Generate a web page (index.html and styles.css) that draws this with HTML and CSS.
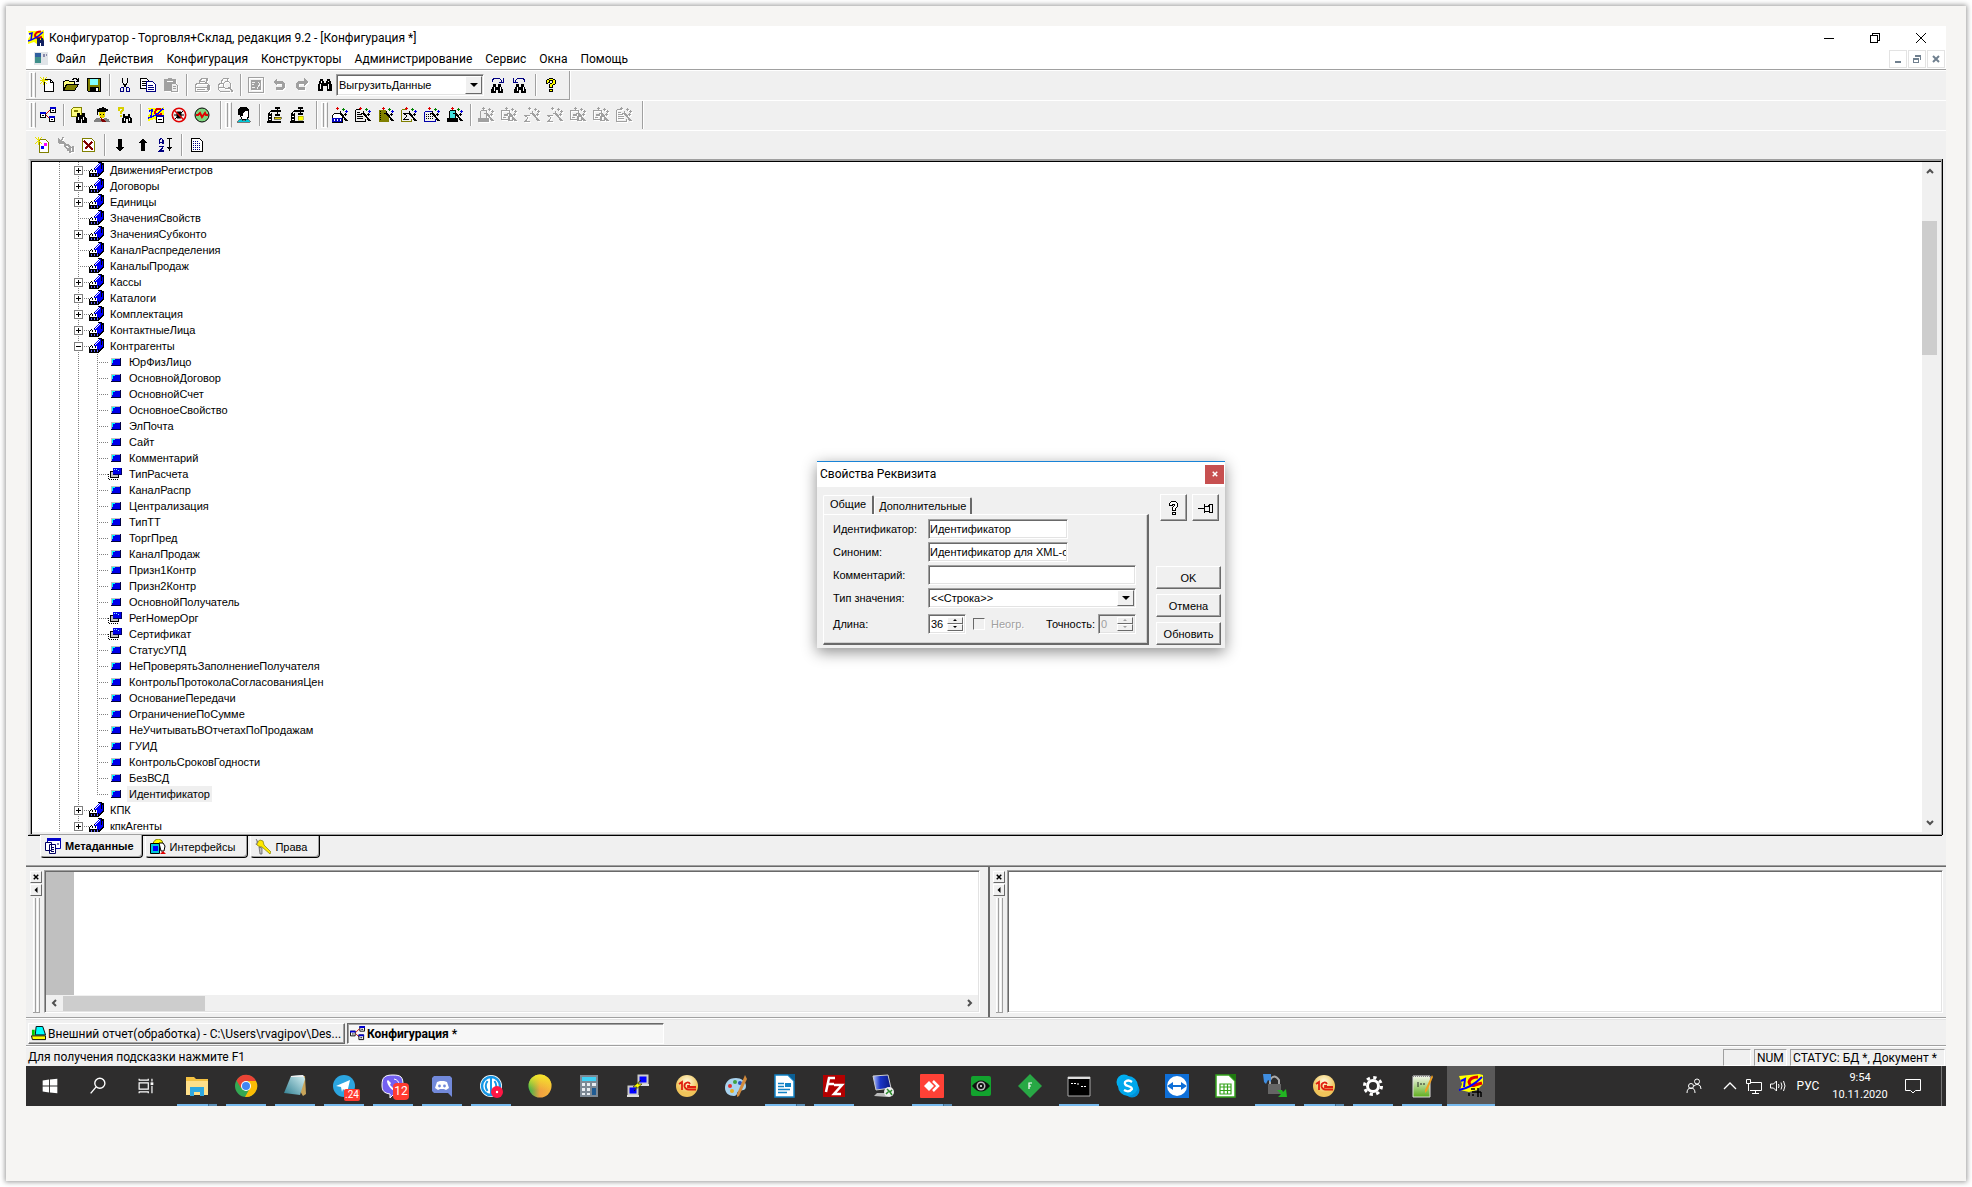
FILE: index.html
```html
<!DOCTYPE html>
<html lang="ru">
<head>
<meta charset="utf-8">
<title>Конфигуратор - Торговля+Склад</title>
<link rel="stylesheet" href="styles.css">
</head>
<body>
<svg class="sprite" aria-hidden="true">
  <defs>
    <linearGradient id="g-sun" x1="0" x2="1"><stop offset="0" stop-color="#2fb54a"/><stop offset=".5" stop-color="#f0a040"/><stop offset="1" stop-color="#f6b83a"/></linearGradient>
    <linearGradient id="g-sun2" x1="0" y1="0" x2="0" y2="1"><stop offset="0" stop-color="#f4e82a"/><stop offset=".7" stop-color="#f4e82a" stop-opacity="0"/></linearGradient>
    <radialGradient id="g-gold" cx=".5" cy=".3"><stop offset="0" stop-color="#fffbe0"/><stop offset="1" stop-color="#f0c45a"/></radialGradient>
    <linearGradient id="g-note" x1="0" y1="1" x2="1" y2="0"><stop offset="0" stop-color="#2f7f92"/><stop offset="1" stop-color="#d8f3f5"/></linearGradient>
    <linearGradient id="g-mon" x1="0" x2="1"><stop offset="0" stop-color="#b9c8ff"/><stop offset=".4" stop-color="#1a35c8"/><stop offset="1" stop-color="#0a1a80"/></linearGradient>
    <linearGradient id="g-npp" x1="0" y1="0" x2="0" y2="1"><stop offset="0" stop-color="#f4f7ea"/><stop offset="1" stop-color="#5fae1c"/></linearGradient>
  </defs>
  <symbol id="page-new" viewBox="0 0 16 16"><path d="M4.500 2.500h6l3 3v9h-9z" fill="#fff" stroke="#000"/><path d="M10.500 2.500v3h3" fill="none" stroke="#000"/><path d="M0 0l7 7M7 0L0 7M3.500 0v8M0 3.500h8" stroke="#e8e000" stroke-width="1.300"/></symbol>
  <symbol id="folder" viewBox="0 0 16 16"><path d="M.5 13.500v-9h1l1-1h3l1 1h5v3" fill="#ffff80" stroke="#000"/><path d="M.5 13.500l3-6h12l-4 6z" fill="#808000" stroke="#000"/><path d="M9 2.500h1l1-1h2l2 2M15.500 1v3h-3" fill="none" stroke="#000"/></symbol>
  <symbol id="disk" viewBox="0 0 16 16"><path d="M1.500 1.500h13v13h-12l-1-1z" fill="#808000" stroke="#000"/><path d="M4 2h8v6H4z" fill="#80ffff"/><path d="M4 10h9v5H4z" fill="#000"/><path d="M10 11h2v3h-2z" fill="#fff"/></symbol>
  <symbol id="cut" viewBox="0 0 16 16"><path d="M5.500 1v4l3 5M10.500 1v4l-3 5" fill="none" stroke="#000"/><path d="M4.500 10.500h2v4h-3v-3zM9.500 10.500h2l1 1v3h-3z" fill="none" stroke="#000080"/></symbol>
  <symbol id="copy" viewBox="0 0 16 16"><path d="M.5 1.500h6l2 2v8h-8z" fill="#fff" stroke="#000"/><path d="M2 4.500h4M2 6.500h5M2 8.500h5" stroke="#000"/><path d="M6.500 4.500h6l3 3v7h-9z" fill="#fff" stroke="#000080"/><path d="M8 8.500h5M8 10.500h6M8 12.500h6" stroke="#000080"/></symbol>
  <symbol id="paste" viewBox="0 0 16 16"><path d="M1 2h4V1h4v1h4v4H8v8H1z" fill="#a0a0a0"/><path d="M4 4h6" stroke="#fff"/><path d="M8.500 6.500h4l2 2v6h-6z" fill="#f0f0f0" stroke="#a0a0a0"/><path d="M10 9.500h3M10 11.500h3" stroke="#a0a0a0"/></symbol>
  <symbol id="print" viewBox="0 0 16 16"><path d="M5.500 6V4l2-2.500h6L12 6M1.500 7.500l2-1h10l2 2v4l-2 2h-12zM1 10.500h12M3 12.500h8M6 4.500h5" fill="none" stroke="#a0a0a0" stroke-width="1.300"/><path d="M13 8h2v5h-2z" fill="#a0a0a0"/></symbol>
  <symbol id="preview" viewBox="0 0 16 16"><path d="M4.500 6V4l2-2.500h5L10 4M1.500 7.500l2-1h3M1.500 7.500v5l2 2h9M1 10.500h6" fill="none" stroke="#a0a0a0"/><circle cx="10" cy="8" r="3.500" fill="none" stroke="#a0a0a0"/><path d="M12 10l4 5" stroke="#a0a0a0" stroke-width="2"/></symbol>
  <symbol id="props-off" viewBox="0 0 16 16"><path d="M.5.5h15v15H.5z" fill="none" stroke="#a0a0a0"/><path d="M3 3h10v10H3z" fill="#a0a0a0"/><path d="M4 5h3M4 7h2M4 10h3M10 5l2 2-3 5" stroke="#f0f0f0" fill="none"/></symbol>
  <symbol id="undo" viewBox="0 0 16 16"><path d="M2 5l4-4v3h4q4 0 4 4.500T9 13H5v-3h4q2 0 2-1.500T9 7H6v2z" fill="#a0a0a0"/></symbol>
  <symbol id="redo" viewBox="0 0 16 16"><path d="M14 5l-4-4v3H6Q2 4 2 8.500T7 13h4v-3H7Q5 10 5 8.500T7 7h3v2z" fill="#a0a0a0"/></symbol>
  <symbol id="bino" viewBox="0 0 16 16"><path d="M3 2h3v2h1v2h2V4h1V2h3v2h1v3h1v7h-5V9H6v5H1V7h1V4h1z" fill="#000"/><path d="M3.500 7v5M11.500 7v5M4.500 4v2M11.500 4v1" stroke="#fff"/></symbol>
  <symbol id="bino-next" viewBox="0 0 16 16"><path d="M4 7h3v3h2V7h3v2l2 4v3H9v-3H7v3H2v-3l2-4z" fill="#000"/><path d="M5.500 10v4M11.500 10v4" stroke="#fff"/><path d="M3 5q0-4 5-4 4 0 5 4" fill="none" stroke="#000080"/><path d="M14.500 1v4.500H10" fill="none" stroke="#000080"/></symbol>
  <symbol id="bino-prev" viewBox="0 0 16 16"><path d="M4 7h3v3h2V7h3v2l2 4v3H9v-3H7v3H2v-3l2-4z" fill="#000"/><path d="M5.500 10v4M11.500 10v4" stroke="#fff"/><path d="M13 5q0-4-5-4-4 0-5 4" fill="none" stroke="#000080"/><path d="M1.500 1v4.500H6" fill="none" stroke="#000080"/></symbol>
  <symbol id="help" viewBox="0 0 16 16"><path d="M3.500 6.500v-3l3-2h3l3 2v3l-3 2v2h-3v-3l3-2v-2h-3v2z" fill="#ff0" stroke="#000"/><path d="M6.500 12.500h3v2h-3z" fill="#ff0" stroke="#000"/></symbol>
  <symbol id="scheme" viewBox="0 0 16 16"><path d="M6 7l4-4M6 8l4 4" stroke="#c00"/><path d="M.5 5.500h5v5h-5zM10.500.5h5v5h-5zM9.500 9.500h5v5h-5z" fill="#fff" stroke="#000"/><path d="M0 5h6v2H0zM10 0h6v2h-6zM9 9h6v2H9z" fill="#0000d0"/><path d="M2 8.500h2M12 3.500h2M11 12.500h2" stroke="#000"/></symbol>
  <symbol id="find-folder" viewBox="0 0 16 16"><path d="M.5 9.500v-7l2-2h8v9z" fill="#ffff80" stroke="#808000"/><path d="M3 3h4v2H3z" fill="#808000"/><path d="M6 6h3v2h2V6h3v3l2 3v4h-5v-4h-1v4H5v-5l1-2z" fill="#000"/><path d="M7.500 10v3M12.500 10v3" stroke="#fff"/></symbol>
  <symbol id="scholar" viewBox="0 0 16 16"><path d="M2 3l7-3 6 3-4 2H5z" fill="#000"/><path d="M5 5h6v4l-2 2H7L5 9z" fill="#e8d800"/><path d="M3 3v5M6 7h1M9 7h1" stroke="#000"/><path d="M0 15q1-5 6-4l2 3 2-3q5 0 6 4z" fill="#808080"/><path d="M6 10l3 2 3 3H8z" fill="#800000"/></symbol>
  <symbol id="find-help" viewBox="0 0 16 16"><path d="M1.500 3.500v-2l1-1h3v3l-2 2v1M3 8.500h2" fill="none" stroke="#d8d000" stroke-width="2"/><path d="M6 7h2v2h3V7h2v3l2 2v4h-4v-4H9v4H5v-4l1-2z" fill="#000"/><path d="M7.500 11v3M12.500 11v3" stroke="#fff"/></symbol>
  <symbol id="onec" viewBox="0 0 16 16"><path d="M0 1h13l3-1v11l-7 3-3-2-6 2V9l2-3z" fill="#ff0"/><path d="M1 4l3-1-1 7" fill="none" stroke="#00f" stroke-width="1.500"/><path d="M13 1.500q-5 0-6 3.500 0 3 3 3l4-1" fill="none" stroke="#e00000" stroke-width="2"/><path d="M0 11q8-2 15-9" fill="none" stroke="#00f" stroke-width="1.500"/></symbol>
  <symbol id="onec-win" viewBox="0 0 16 16"><use href="#onec"/><path d="M8.500 8.500h7v7h-7z" fill="#fff" stroke="#000"/><path d="M8 8h8v2H8z" fill="#00a"/><path d="M10 12.500h4" stroke="#000"/></symbol>
  <symbol id="onec-app" viewBox="0 0 16 16"><use href="#onec"/><path d="M9 8h3v2h1V8h2l1 3v5h-3v-3h-1v3H9v-5z" fill="#102060"/></symbol>
  <symbol id="bug" viewBox="0 0 16 16"><path d="M6 5h4v6H6zM4 4l2 2M12 4l-2 2M3 8h3M10 8h3M4 12l2-2M12 12l-2-2" fill="#000" stroke="#000"/><circle cx="8" cy="8" r="6.700" fill="none" stroke="#e00000" stroke-width="1.600"/><path d="M3 3l10 10" stroke="#e00000" stroke-width="1.500"/></symbol>
  <symbol id="scope" viewBox="0 0 16 16"><circle cx="8" cy="8" r="7" fill="#7fd67f" stroke="#000"/><path d="M2 8h2l2-2 2 4 3-4 1 2h2" fill="none" stroke="#e00000" stroke-width="2"/></symbol>
  <symbol id="user" viewBox="0 0 16 16"><path d="M4 8V3l2-2h4l2 2v4l1 2-2 3H6z" fill="#fff" stroke="#000"/><path d="M2 8V2l3-2h5l3 2v2H9L7 6v3H5z" fill="#000"/><path d="M1 15l3-3 4 2 3-2 3 2v1z" fill="#00c8d8" stroke="#000" stroke-width=".5"/></symbol>
  <symbol id="press" viewBox="0 0 16 16"><path d="M2 15V6l2-2h4M4 15V7l1-1M0 15h14M8 1h5M10.500 1v7M8 4h6M8 8h5" fill="none" stroke="#000" stroke-width="1.300"/><path d="M2 9h2M2 12h2" stroke="#fff"/><path d="M7 10h7v2H7z" fill="#d8c800" stroke="#000" stroke-width=".5"/></symbol>
  <symbol id="press2" viewBox="0 0 16 16"><path d="M2 15V6l2-2h4M4 15V7l1-1M0 15h14M8 1h5M10.500 1v5M8 4h6M8 7h5" fill="none" stroke="#000" stroke-width="1.300"/><path d="M2 9h2M2 12h2" stroke="#fff"/><path d="M8 9h5v4H8z" fill="#ff0" stroke="#808000" stroke-width=".5"/></symbol>
  <symbol id="wand" viewBox="0 0 16 16"><path d="M9 7l6 7" stroke="currentColor" stroke-width="2"/><path d="M8 4v4M6 6h4M13 6v3M12 7.500h3" stroke="currentColor"/><path d="M5.500 0v3M4 1.500h3" stroke="var(--c1)"/><path d="M11.500 1v3M10 2.500h3" stroke="var(--c2)"/><path d="M14.500 3v3M13 4.500h3" stroke="var(--c3)"/></symbol>
  <symbol id="w-book" viewBox="0 0 16 16"><path d="M0 9l3-3h5l2 3v6H0z" fill="#fff" stroke="currentColor"/><path d="M0 11h10v4H0z" fill="var(--c4)"/><path d="M2 12v2M5 12v2M8 12v2" stroke="#fff"/><use href="#wand"/></symbol>
  <symbol id="w-doc" viewBox="0 0 16 16"><path d="M.5 2.500h4M.5 2.500v12h10v-3" fill="none" stroke="currentColor"/><path d="M2 5.500h3M2 7.500h5M2 9.500h6M2 11.500h6" stroke="currentColor"/><use href="#wand"/></symbol>
  <symbol id="w-journal" viewBox="0 0 16 16"><path d="M1 3h7v5l3 3v4H1z" fill="#808000"/><path d="M2.500 4v10" stroke="#000" stroke-dasharray="1 1"/><use href="#wand"/></symbol>
  <symbol id="w-sum" viewBox="0 0 16 16"><path d="M.5 2.500h4M.5 2.500v12h10v-3" fill="none" stroke="var(--c6)"/><path d="M8 6.500H3l3 2.500-3 3h5" fill="none" stroke="currentColor"/><use href="#wand"/></symbol>
  <symbol id="w-sigma" viewBox="0 0 16 16"><path d="M6 8.500H1L4 11l-3 3.500h5" fill="none" stroke="currentColor"/><use href="#wand"/></symbol>
  <symbol id="w-grid" viewBox="0 0 16 16"><path d="M.5 4.500h8M.5 4.500v10h11v-3" fill="none" stroke="#00a"/><path d="M2 7.500h6M2 9.500h7M2 11.500h8" stroke="#000" stroke-dasharray="1 1"/><use href="#wand"/></symbol>
  <symbol id="w-hat" viewBox="0 0 16 16"><path d="M2 5l2-2h4v8H2z" fill="var(--c5)" stroke="currentColor"/><path d="M0 11h11v4H0z" fill="currentColor"/><use href="#wand"/></symbol>
  <symbol id="w-tab" viewBox="0 0 16 16"><path d="M.5 3.500h8v9h-8zM2 10.500h3M7 9h4v4H7z" fill="none" stroke="currentColor"/><path d="M3 7h4v2H3z" fill="currentColor"/><use href="#wand"/></symbol>
  <symbol id="add-node" viewBox="0 0 16 16"><path d="M4.500 2.500h6l3 3v10h-9z" fill="#fff" stroke="#808000"/><path d="M0 0l7 7M7 0L0 7M3.500 0v8" stroke="#e8e000" stroke-width="1.300"/><path d="M6 9h3v3H6z" fill="#00f"/><path d="M9 6h3v3H9z" fill="#f0f"/></symbol>
  <symbol id="edit-off" viewBox="0 0 16 16"><path d="M0 2l5 5M5 0L2 7M0 5h6M6 6l3 3M7 9l3-1 2 2-2 3zM12 11l3-1v4l-3 1z" fill="none" stroke="#a0a0a0" stroke-width="1.500"/></symbol>
  <symbol id="del-node" viewBox="0 0 16 16"><path d="M1.500 1.500h9l3 3v10h-12z" fill="#fff" stroke="#808000"/><path d="M3 4l9 9M11 5l-7 7" stroke="#800000" stroke-width="2"/></symbol>
  <symbol id="down" viewBox="0 0 16 16"><path d="M6 2h4v8h2l-4 5-4-5h2z" fill="#000"/></symbol>
  <symbol id="up" viewBox="0 0 16 16"><path d="M6 14h4V6h2L8 1 4 6h2z" fill="#000"/></symbol>
  <symbol id="sort" viewBox="0 0 16 16"><path d="M1.500 7V3l1.500-2 2 2v4M1 5.500h5M1 9.500h4.500L1.500 14H6" fill="none" stroke="#000080" stroke-width="1.300"/><path d="M9 1.500h5M11.500 1v12" stroke="#000"/><path d="M9 10h5l-2.500 4z" fill="#000"/></symbol>
  <symbol id="sheet-i" viewBox="0 0 16 16"><path d="M2.500 1.500h8l3 3v10h-11z" fill="#fff" stroke="#000"/><path d="M4 4.500h5M4 6.500h8M4 8.500h8M4 10.500h8M4 12.500h8" stroke="#000080" stroke-dasharray="1 1"/></symbol>
  <symbol id="mdi-doc" viewBox="0 0 16 16"><path d="M1 1h14v13H1z" fill="#e0e4e8"/><path d="M2 2h6v10H2z" fill="#3f8f8a"/><path d="M2 2h6v4H2z" fill="#2f5f9f"/><path d="M10 3h2v3h-2zM13 3h1v2h-1z" fill="#88a"/></symbol>
  <symbol id="ref" viewBox="0 0 16 16"><path d="M0 15V10l3-4 5-5 1-1h4v1h2v8l-5 6H0z" fill="#000"/><path d="M8 1h4v6l-4 6V8H5z" fill="#00f"/><path d="M13 3l1-1v6l-4 5v-3l3-4z" fill="#00f"/><path d="M4 6l6-5M6 7l5-5M3 7h2" stroke="#fff" stroke-width="1.300"/><path d="M1 9l1-1h6v3H1z" fill="#fff"/><path d="M3.500 8v2M6.500 8v2" stroke="#000"/><path d="M2 13h1M5 13h1M8 13h1" stroke="#66f" stroke-width="2"/></symbol>
  <symbol id="attr" viewBox="0 0 16 16"><path d="M3 4h10v8H3z" fill="#c0c0c0"/><path d="M4 5h9v7H4z" fill="#0000e8"/><path d="M3 11.500h10M12.500 4v8" stroke="#000040"/><path d="M4 5h3v1H5v3H4z" fill="#0ff"/></symbol>
  <symbol id="attr-multi" viewBox="0 0 16 16"><path d="M.5 8v5.500h9" fill="none" stroke="#000" stroke-dasharray="1 1"/><path d="M2.500 5.500h8v6h-8z" fill="#c0c0c0" stroke="#000"/><path d="M5 2h9v7H5z" fill="#0000e8"/><path d="M5 8.500h9M13.500 2v7" stroke="#000060"/><path d="M6 3h1v1H6zM8 3h1v1H8zM10 4h1v1h-1z" fill="#80f0ff"/></symbol>
  <symbol id="t-meta" viewBox="0 0 16 16"><path d="M2.500.5h13v10h-13z" fill="#fff" stroke="#00a"/><path d="M2 0h14v3H2z" fill="#00c"/><path d="M.5 4.500h6v8h-6zM4.500 6.500h6v9h-6z" fill="#fff" stroke="#000060"/><path d="M6 9.500h3M6 11.500h3M6 13.500h3M12 6h2" stroke="#000060"/></symbol>
  <symbol id="t-int" viewBox="0 0 16 16"><path d="M3 5q1-5 6-5 4 1 4 5" fill="#ff0" stroke="#808000"/><path d="M.5 4.500h9v10h-9z" fill="#00c8d8" stroke="#000"/><path d="M3 7h5v5H3z" fill="#00f"/><path d="M9 4h4l2 3-1 5h-3z" fill="#fff" stroke="#000"/><path d="M10 15l3-3 3 3z" fill="#e00000"/></symbol>
  <symbol id="t-key" viewBox="0 0 16 16"><path d="M5 1l3 1 1 4 7 7-1 2-8-7-4-1-2-3z" fill="#ffe800" stroke="#808000" stroke-width=".7"/><path d="M1 0l2 3-2 3M4 8l3 1v6H5z" fill="#c0c0c0" stroke="#555" stroke-width=".7"/></symbol>
  <symbol id="doc-tab" viewBox="0 0 16 16"><path d="M5.500.5h7l3 9h-11z" fill="#0ff" stroke="#000"/><path d="M1 4h3v6H1z" fill="#0c0"/><path d="M.5 10.500h15v4h-14z" fill="#ff0" stroke="#000"/></symbol>
  <symbol id="x" viewBox="0 0 8 8"><path d="M1 1l6 6M7 1L1 7" stroke="currentColor" stroke-width="2"/></symbol>
  <symbol id="chev" viewBox="0 0 8 8"><path d="M1 6l3-3 3 3" fill="none" stroke="#505050" stroke-width="2"/></symbol>
  <symbol id="tri" viewBox="0 0 8 8"><path d="M0 2h8L4 6z" fill="currentColor"/></symbol>

  <symbol id="k-win" viewBox="0 0 24 24"><path d="M4 6l7-1v6.500H4zM12 4.800L20 4v7.500h-8zM4 12.500h7V19l-7-1zM12 12.500h8V20l-8-1z" fill="#fff"/></symbol>
  <symbol id="k-search" viewBox="0 0 24 24"><circle cx="14" cy="9" r="5.500" fill="none" stroke="#fff" stroke-width="1.500"/><path d="M10 13l-6 7" stroke="#fff" stroke-width="1.500"/></symbol>
  <symbol id="k-task" viewBox="0 0 24 24"><path d="M4.500 8.500h10v7h-10zM4.500 6V4M4.500 5.500h10V4M4.500 18v2M4.500 18.500h10V20M18.500 4v3M18.500 12v8" fill="none" stroke="#fff" stroke-width="1.300"/><path d="M17 8h3v3h-3z" fill="#fff"/></symbol>
  <symbol id="k-exp" viewBox="0 0 24 24"><path d="M1 3h8l2 2h12v15H1z" fill="#f5c242"/><path d="M1 7h22v14H1z" fill="#ffe08a"/><path d="M5 22v-9h14v9h-4v-4H9v4z" fill="#2fa8e0"/></symbol>
  <symbol id="k-chrome" viewBox="0 0 24 24"><circle cx="12" cy="12" r="11" fill="#34a853"/><path d="M2.500 6.500A11 11 0 0 1 22 7H12L7 14z" fill="#ea4335"/><path d="M22 7a11 11 0 0 1-11 16l5-9-2-7z" fill="#fbbc05"/><circle cx="12" cy="12" r="5" fill="#fff"/><circle cx="12" cy="12" r="4" fill="#4285f4"/></symbol>
  <symbol id="k-note" viewBox="0 0 24 24"><path d="M8 2h14l1 18-3 2z" fill="#c8a45a"/><path d="M8 2l12-1 2 4-5 16L1 19z" fill="url(#g-note)"/><path d="M8 2l12-1 1 2H8z" fill="#eee"/></symbol>
  <symbol id="k-tg" viewBox="0 0 24 24"><circle cx="12" cy="12" r="11" fill="#2ca5e0"/><path d="M4 12l14-6-3 13-4-4-1 3-1-5z" fill="#fff"/></symbol>
  <symbol id="k-viber" viewBox="0 0 24 24"><path d="M12 1c8 0 10 2 10 10s-2 9-9 9l-4 4v-4c-6-1-8-3-8-9C1 3 4 1 12 1z" fill="#7360f2" stroke="#fff"/><path d="M7 6l3 3-1 2 4 4 2-1 3 3-2 1C11 17 6 11 6 7z" fill="#fff"/><path d="M13 5q5 1 5 6" fill="none" stroke="#fff"/></symbol>
  <symbol id="k-discord" viewBox="0 0 24 24"><path d="M4 2h16l2 2v19l-4-4H4l-2-2V4z" fill="#7289da"/><path d="M7 8l3-1h4l3 1 2 6-3 2-2-1h-4l-2 1-3-2z" fill="#fff"/><circle cx="9.500" cy="12" r="1.400" fill="#7289da"/><circle cx="14.500" cy="12" r="1.400" fill="#7289da"/></symbol>
  <symbol id="k-ring" viewBox="0 0 24 24"><circle cx="12" cy="12" r="11" fill="#fff"/><circle cx="12" cy="12" r="9" fill="#fff" stroke="#1597e5" stroke-width="2.500"/><path d="M12 20V4M8.500 17Q5 12 8.500 7M15.500 17q3.500-5 0-10" fill="none" stroke="#1597e5" stroke-width="2"/><circle cx="18" cy="18" r="6" fill="#ff1744"/><circle cx="18" cy="18" r="1.200" fill="#fff"/></symbol>
  <symbol id="k-sun" viewBox="0 0 24 24"><circle cx="12" cy="12" r="11.500" fill="url(#g-sun)"/><circle cx="12" cy="12" r="11.500" fill="url(#g-sun2)"/></symbol>
  <symbol id="k-calc" viewBox="0 0 24 24"><path d="M3 1h18v22H3z" fill="#7d8995"/><path d="M5 3h14v4H5z" fill="#3fd0f5"/><path d="M5 9h3v3H5zM10 9h3v3h-3zM15 9h4v3h-4zM5 14h3v3H5zM10 14h3v3h-3zM5 19h3v2H5zM10 19h3v2h-3z" fill="#e8edf2"/><path d="M15 14h4v7h-4z" fill="#1f5b93"/></symbol>
  <symbol id="k-putty" viewBox="0 0 24 24"><path d="M12.500 1.500h9v8h-9zM2.500 12.500h9v8h-9z" fill="#00f" stroke="#ccc" stroke-width="2"/><path d="M11 11h12M1 22h12" stroke="#ddd" stroke-width="2"/><path d="M15 6l-8 7h4l-3 4 8-7h-4z" fill="#ff0" stroke="#000" stroke-width=".5"/></symbol>
  <symbol id="k-1c" viewBox="0 0 24 24"><circle cx="12" cy="12" r="11" fill="url(#g-gold)"/><path d="M4 10l3-2v8M15 10q-1-2-3-1.500-3 1-2.500 4 1 3 4 3H21M15 12h-2v1h8" fill="none" stroke="#e02010" stroke-width="1.800"/></symbol>
  <symbol id="k-paint" viewBox="0 0 24 24"><path d="M12 4C4 4 1 9 1 14s4 8 9 8c4 0 2-4 5-5s7 0 7-5-5-8-10-8z" fill="#a9d3ee"/><circle cx="6" cy="12" r="2" fill="#e03030"/><circle cx="11" cy="8" r="2" fill="#40a040"/><circle cx="8" cy="17" r="2" fill="#e8b020"/><circle cx="16" cy="9" r="2" fill="#2850c0"/><path d="M21 1l2 4-8 17-2 1V20z" fill="#d28a3c"/></symbol>
  <symbol id="k-writer" viewBox="0 0 24 24"><path d="M2 1h13l6 6v16H2z" fill="#fff" stroke="#1283c6" stroke-width="1.500"/><path d="M15 0h7v7z" fill="#0b5f94"/><path d="M5 9.500h6M5 12.500h6M5 15.500h12M5 18.500h9" stroke="#1283c6" stroke-width="1.500"/><path d="M12 9h6v4h-6z" fill="#1283c6"/></symbol>
  <symbol id="k-fz" viewBox="0 0 24 24"><path d="M1 1h22v22H1z" fill="#b30000"/><path d="M13 4H7L4 18M6 10h6M12 11h8l-8 9h7" fill="none" stroke="#fff" stroke-width="2.500"/></symbol>
  <symbol id="k-term" viewBox="0 0 24 24"><path d="M2 2l15-1 3 13-15 2z" fill="url(#g-mon)" stroke="#ccc"/><path d="M3 22l3-3h8l3 4z" fill="#bbb"/><circle cx="18" cy="18" r="5" fill="#eee"/><path d="M15 20l3-3-2-2M21 16l-2 2 2 3" fill="none" stroke="#2a8a2a" stroke-width="1.500"/></symbol>
  <symbol id="k-any" viewBox="0 0 24 24"><rect width="24" height="24" rx="1" fill="#ff4136"/><path d="M9 7l5 5-5 5-5-5z" fill="#fff"/><path d="M13 7l5 5-5 5" fill="none" stroke="#fff" stroke-width="2.500"/></symbol>
  <symbol id="k-eye" viewBox="0 0 24 24"><rect x="2" y="2" width="20" height="20" rx="2" fill="#12a32e"/><path d="M3 12q9-11 18 0-9 11-18 0z" fill="#111"/><circle cx="12" cy="12" r="4.500" fill="#bbb"/><circle cx="12" cy="12" r="3" fill="#111"/><circle cx="12" cy="12" r="1" fill="#fff"/></symbol>
  <symbol id="k-f" viewBox="0 0 24 24"><path d="M12 0l12 12-12 12L0 12z" fill="#28a845"/><path d="M11 15V9h3M11 12h2" fill="none" stroke="#fff" stroke-width="1.200"/></symbol>
  <symbol id="k-cmd" viewBox="0 0 24 24"><path d="M1 3h22v19H1z" fill="#000" stroke="#aaa"/><path d="M1 3h22v2H1z" fill="#ddd"/><path d="M4 9.500h5M11 9v3M14 12.500h5" stroke="#fff" stroke-dasharray="2 1"/></symbol>
  <symbol id="k-skype" viewBox="0 0 24 24"><circle cx="8" cy="8" r="7.500" fill="#00aff0"/><circle cx="16" cy="16" r="7.500" fill="#0090d8"/><circle cx="12" cy="12" r="10" fill="#00a8ec"/><path d="M16 8q-4-3-7 0-1 3 3 4t4 3q-3 4-8 1" fill="none" stroke="#fff" stroke-width="2.200"/></symbol>
  <symbol id="k-tv" viewBox="0 0 24 24"><path d="M0 0h24v24H0z" fill="#0e6fd8"/><circle cx="12" cy="12" r="10" fill="#fff"/><path d="M2 12l6-4v3h8V8l6 4-6 4v-3H8v3z" fill="#0e6fd8"/></symbol>
  <symbol id="k-calcs" viewBox="0 0 24 24"><path d="M2 1h13l6 6v16H2z" fill="#fff" stroke="#35a31c" stroke-width="1.500"/><path d="M15 0h7v7z" fill="#1f7a10"/><path d="M6 10h11v10H6zM6 13h11M6 16.500h11M10 10v10M13.500 10v10" fill="none" stroke="#35a31c" stroke-width="1.200"/></symbol>
  <symbol id="k-lock" viewBox="0 0 24 24"><path d="M7 11V6q4-7 9 0v5" fill="none" stroke="#aaa" stroke-width="2"/><path d="M5 10h13v10H5z" fill="#666"/><path d="M0 0h8v8L5 6l-2 4-2-2z" fill="#3f8de0"/><path d="M24 23h-9l3-3-4-4h5l1 2 3-3z" fill="#22b522"/></symbol>
  <symbol id="k-gear" viewBox="0 0 24 24"><circle cx="12" cy="12" r="5.500" fill="none" stroke="#fff" stroke-width="3"/><circle cx="12" cy="12" r="8.500" fill="none" stroke="#fff" stroke-width="3" stroke-dasharray="3.300 3.375"/></symbol>
  <symbol id="k-npp" viewBox="0 0 24 24"><path d="M3 2h17v21H3z" fill="url(#g-npp)" stroke="#ddd"/><path d="M3 2h17" stroke="#888" stroke-width="2" stroke-dasharray="1 1"/><path d="M8 8v5M10 10h2M13 10h2" stroke="#222"/><path d="M22 1l1 2-6 14-2 2V16z" fill="#f0a020"/></symbol>
  <symbol id="k-1c7" viewBox="0 0 24 24"><path d="M0 2l20-2 4 1v9l-6 6-8 2-9-2 2-6z" fill="#ff0"/><path d="M2 7l4-2-1 8" fill="none" stroke="#00f" stroke-width="2"/><path d="M19 3q-8 0-9 5 1 5 6 3l7-2" fill="none" stroke="#e00000" stroke-width="3"/><path d="M0 16q12-2 23-13" fill="none" stroke="#00f" stroke-width="2"/><path d="M12 15h4M13 18h9M19 14v9M10 22v-3M14 22v-2M22 18v5" stroke="#000" stroke-width="1.500"/></symbol>
  <symbol id="s-people" viewBox="0 0 16 16"><circle cx="5" cy="8" r="2.500" fill="none" stroke="#fff"/><path d="M1 15q0-5 4-5 4 0 4 5" fill="none" stroke="#fff"/><circle cx="11" cy="3.500" r="2.500" fill="none" stroke="#fff"/><path d="M8 8q2-2 4-1.500 3 .5 3 4.500" fill="none" stroke="#fff"/></symbol>
  <symbol id="s-up" viewBox="0 0 16 16"><path d="M2 11l6-6 6 6" fill="none" stroke="#fff" stroke-width="1.300"/></symbol>
  <symbol id="s-net" viewBox="0 0 16 16"><path d="M4 4.500h11.500v8H4M9.500 13v2.500M6 15.500h7M.5 1.500h4v4h-4zM2.500 6v7" fill="none" stroke="#fff"/></symbol>
  <symbol id="s-vol" viewBox="0 0 16 16"><path d="M.5 6h3l3-3v10l-3-3h-3zM8.500 6q1 2 0 4M11 4.500q2 3.500 0 7M13.500 3q3 5 0 10" fill="none" stroke="#fff"/></symbol>
  <symbol id="s-msg" viewBox="0 0 16 16"><path d="M.5 1.500h15v11h-5L8 15l-2.500-2.500h-5z" fill="none" stroke="#fff"/></symbol>
</svg>

<main class="sheet">
<div class="app">
  <header class="titlebar">
    <svg class="i16"><use href="#onec-app"/></svg>
    <h1 class="title">Конфигуратор - Торговля+Склад, редакция 9.2 - [Конфигурация *]</h1>
    <div class="win-btns">
      <button aria-label="Свернуть"><svg viewBox="0 0 10 10"><path d="M0 5.500h10" stroke="#000"/></svg></button>
      <button aria-label="Восстановить"><svg viewBox="0 0 10 10"><path d="M.5 2.500h7v7h-7zM2.500 2V.5h7v7H8" fill="none" stroke="#000"/></svg></button>
      <button aria-label="Закрыть"><svg viewBox="0 0 10 10"><path d="M0 0l10 10M10 0L0 10" stroke="#000" shape-rendering="auto"/></svg></button>
    </div>
  </header>
  <nav class="menubar">
    <svg class="i16"><use href="#mdi-doc"/></svg>
    <button>Файл</button><button>Действия</button><button>Конфигурация</button><button>Конструкторы</button><button>Администрирование</button><button>Сервис</button><button>Окна</button><button>Помощь</button>
    <div class="mdi-btns">
      <button aria-label="Свернуть окно"><svg viewBox="0 0 8 8"><path d="M1 6h6v2H1z" fill="#70808f"/></svg></button>
      <button aria-label="Восстановить окно"><svg viewBox="0 0 8 8"><path d="M0 3h6v5H0zM2 0h6v5H7V2H2z" fill="#70808f"/><path d="M1 5h4v2H1z" fill="#fff"/></svg></button>
      <button aria-label="Закрыть окно"><svg viewBox="0 0 8 8" color="#70808f"><use href="#x"/></svg></button>
    </div>
  </nav>

  <div class="bars">
    <div class="bar-row">
      <div class="bar bar-top"><i class="grip"></i>
        <button aria-label="Новый"><svg><use href="#page-new"/></svg></button><button aria-label="Открыть"><svg><use href="#folder"/></svg></button><button aria-label="Сохранить"><svg><use href="#disk"/></svg></button><i class="sep"></i>
        <button aria-label="Вырезать"><svg><use href="#cut"/></svg></button><button aria-label="Копировать"><svg><use href="#copy"/></svg></button><button class="off" aria-label="Вставить" disabled><svg><use href="#paste"/></svg></button><i class="sep"></i>
        <button class="off" aria-label="Печать" disabled><svg><use href="#print"/></svg></button><button class="off" aria-label="Просмотр" disabled><svg><use href="#preview"/></svg></button><i class="sep"></i>
        <button class="off" aria-label="Свойства" disabled><svg><use href="#props-off"/></svg></button><button class="off" aria-label="Отменить" disabled><svg><use href="#undo"/></svg></button><button class="off" aria-label="Вернуть" disabled><svg><use href="#redo"/></svg></button><button aria-label="Найти"><svg><use href="#bino"/></svg></button>
        <span class="combo combo-find"><select aria-label="Строка поиска"><option>ВыгрузитьДанные</option></select><span class="drop"><svg><use href="#tri"/></svg></span></span>
        <button aria-label="Найти следующее"><svg><use href="#bino-next"/></svg></button><button aria-label="Найти предыдущее"><svg><use href="#bino-prev"/></svg></button><i class="sep"></i>
        <button aria-label="Помощь"><svg><use href="#help"/></svg></button>
      </div>
    </div>
    <div class="bar-row bar-mid">
      <div class="bar"><i class="grip"></i>
        <button aria-label="Конфигурация"><svg><use href="#scheme"/></svg></button><i class="sep"></i>
        <button aria-label="Поиск в файлах"><svg><use href="#find-folder"/></svg></button><button aria-label="Синтакс-помощник"><svg><use href="#scholar"/></svg></button><button aria-label="Поиск справки"><svg><use href="#find-help"/></svg></button><i class="sep"></i>
        <button aria-label="1С:Предприятие"><svg><use href="#onec-win"/></svg></button><button aria-label="Отладчик"><svg class="smooth"><use href="#bug"/></svg></button><button aria-label="Монитор"><svg class="smooth"><use href="#scope"/></svg></button>
      </div>
      <div class="bar"><i class="grip"></i>
        <button aria-label="Пользователи"><svg><use href="#user"/></svg></button><i class="sep"></i>
        <button aria-label="Сохранить данные"><svg><use href="#press"/></svg></button><button aria-label="Восстановить данные"><svg><use href="#press2"/></svg></button>
      </div>
      <div class="bar"><i class="grip"></i>
        <button aria-label="Конструктор справочника"><svg><use href="#w-book"/></svg></button><button aria-label="Конструктор документа"><svg><use href="#w-doc"/></svg></button><button aria-label="Конструктор журнала"><svg><use href="#w-journal"/></svg></button><button aria-label="Конструктор отчета"><svg><use href="#w-sum"/></svg></button><button aria-label="Конструктор таблицы"><svg><use href="#w-grid"/></svg></button><button aria-label="Конструктор обработки"><svg><use href="#w-hat"/></svg></button><i class="sep"></i>
        <button class="off" disabled aria-label="Мастер 1"><svg><use href="#w-hat"/></svg></button><button class="off" disabled aria-label="Мастер 2"><svg><use href="#w-tab"/></svg></button><button class="off" disabled aria-label="Мастер 3"><svg><use href="#w-sigma"/></svg></button><button class="off" disabled aria-label="Мастер 4"><svg><use href="#w-sigma"/></svg></button><button class="off" disabled aria-label="Мастер 5"><svg><use href="#w-tab"/></svg></button><button class="off" disabled aria-label="Мастер 6"><svg><use href="#w-tab"/></svg></button><button class="off" disabled aria-label="Мастер 7"><svg><use href="#w-doc"/></svg></button>
      </div>
    </div>
    <div class="bar-row bar-low">
      <div class="bar">
        <button aria-label="Добавить"><svg><use href="#add-node"/></svg></button><button class="off" disabled aria-label="Изменить"><svg><use href="#edit-off"/></svg></button><button aria-label="Удалить"><svg><use href="#del-node"/></svg></button><i class="sep"></i>
        <button aria-label="Ниже"><svg><use href="#down"/></svg></button><button aria-label="Выше"><svg><use href="#up"/></svg></button><button aria-label="Сортировать"><svg><use href="#sort"/></svg></button><i class="sep"></i>
        <button aria-label="Свойства объекта"><svg><use href="#sheet-i"/></svg></button>
      </div>
    </div>
  </div>

  <section class="mdi">
    <div class="tree-frame">
      <ul class="tree">
        <li class="node plus"><svg><use href="#ref"/></svg><span>ДвиженияРегистров</span></li>
        <li class="node plus"><svg><use href="#ref"/></svg><span>Договоры</span></li>
        <li class="node plus"><svg><use href="#ref"/></svg><span>Единицы</span></li>
        <li class="node"><svg><use href="#ref"/></svg><span>ЗначенияСвойств</span></li>
        <li class="node plus"><svg><use href="#ref"/></svg><span>ЗначенияСубконто</span></li>
        <li class="node"><svg><use href="#ref"/></svg><span>КаналРаспределения</span></li>
        <li class="node"><svg><use href="#ref"/></svg><span>КаналыПродаж</span></li>
        <li class="node plus"><svg><use href="#ref"/></svg><span>Кассы</span></li>
        <li class="node plus"><svg><use href="#ref"/></svg><span>Каталоги</span></li>
        <li class="node plus"><svg><use href="#ref"/></svg><span>Комплектация</span></li>
        <li class="node plus"><svg><use href="#ref"/></svg><span>КонтактныеЛица</span></li>
        <li class="node minus"><svg><use href="#ref"/></svg><span>Контрагенты</span></li>
        <li class="leaf"><svg><use href="#attr"/></svg><span>ЮрФизЛицо</span></li>
        <li class="leaf"><svg><use href="#attr"/></svg><span>ОсновнойДоговор</span></li>
        <li class="leaf"><svg><use href="#attr"/></svg><span>ОсновнойСчет</span></li>
        <li class="leaf"><svg><use href="#attr"/></svg><span>ОсновноеСвойство</span></li>
        <li class="leaf"><svg><use href="#attr"/></svg><span>ЭлПочта</span></li>
        <li class="leaf"><svg><use href="#attr"/></svg><span>Сайт</span></li>
        <li class="leaf"><svg><use href="#attr"/></svg><span>Комментарий</span></li>
        <li class="leaf"><svg><use href="#attr-multi"/></svg><span>ТипРасчета</span></li>
        <li class="leaf"><svg><use href="#attr"/></svg><span>КаналРаспр</span></li>
        <li class="leaf"><svg><use href="#attr"/></svg><span>Централизация</span></li>
        <li class="leaf"><svg><use href="#attr"/></svg><span>ТипТТ</span></li>
        <li class="leaf"><svg><use href="#attr"/></svg><span>ТоргПред</span></li>
        <li class="leaf"><svg><use href="#attr"/></svg><span>КаналПродаж</span></li>
        <li class="leaf"><svg><use href="#attr"/></svg><span>Призн1Контр</span></li>
        <li class="leaf"><svg><use href="#attr"/></svg><span>Призн2Контр</span></li>
        <li class="leaf"><svg><use href="#attr"/></svg><span>ОсновнойПолучатель</span></li>
        <li class="leaf"><svg><use href="#attr-multi"/></svg><span>РегНомерОрг</span></li>
        <li class="leaf"><svg><use href="#attr-multi"/></svg><span>Сертификат</span></li>
        <li class="leaf"><svg><use href="#attr"/></svg><span>СтатусУПД</span></li>
        <li class="leaf"><svg><use href="#attr"/></svg><span>НеПроверятьЗаполнениеПолучателя</span></li>
        <li class="leaf"><svg><use href="#attr"/></svg><span>КонтрольПротоколаСогласованияЦен</span></li>
        <li class="leaf"><svg><use href="#attr"/></svg><span>ОснованиеПередачи</span></li>
        <li class="leaf"><svg><use href="#attr"/></svg><span>ОграничениеПоСумме</span></li>
        <li class="leaf"><svg><use href="#attr"/></svg><span>НеУчитыватьВОтчетахПоПродажам</span></li>
        <li class="leaf"><svg><use href="#attr"/></svg><span>ГУИД</span></li>
        <li class="leaf"><svg><use href="#attr"/></svg><span>КонтрольСроковГодности</span></li>
        <li class="leaf"><svg><use href="#attr"/></svg><span>БезВСД</span></li>
        <li class="leaf last"><svg><use href="#attr"/></svg><span class="sel">Идентификатор</span></li>
        <li class="node plus"><svg><use href="#ref"/></svg><span>КПК</span></li>
        <li class="node plus"><svg><use href="#ref"/></svg><span>кпкАгенты</span></li>
      </ul>
      <div class="vscroll"><svg><use href="#chev"/></svg><i class="vthumb"></i><svg class="flip"><use href="#chev"/></svg></div>
    </div>
    <div class="tabs">
      <button class="tab active"><svg><use href="#t-meta"/></svg>Метаданные</button>
      <button class="tab"><svg><use href="#t-int"/></svg>Интерфейсы</button>
      <button class="tab"><svg><use href="#t-key"/></svg>Права</button>
    </div>
  </section>

  <section class="docks">
    <div class="dock">
      <div class="dock-side"><button aria-label="Закрыть панель"><svg><use href="#x"/></svg></button><button aria-label="Свернуть панель"><svg class="right"><use href="#tri"/></svg></button><i class="dock-grip"></i></div>
      <div class="pane">
        <div class="pane-body"><i class="gutter"></i></div>
        <div class="hscroll"><svg class="left"><use href="#chev"/></svg><i class="hthumb"></i><svg class="right"><use href="#chev"/></svg></div>
      </div>
    </div>
    <div class="dock">
      <div class="dock-side"><button aria-label="Закрыть панель"><svg><use href="#x"/></svg></button><button aria-label="Свернуть панель"><svg class="right"><use href="#tri"/></svg></button><i class="dock-grip"></i></div>
      <div class="pane"></div>
    </div>
  </section>

  <div class="windows">
    <button><svg><use href="#doc-tab"/></svg><span>Внешний отчет(обработка) - C:\Users\rvagipov\Des...</span></button>
    <button class="active"><svg><use href="#scheme"/></svg><span>Конфигурация *</span></button>
  </div>

  <footer class="status"><span class="hint">Для получения подсказки нажмите F1</span><span class="cell cell-blank"></span><span class="cell cell-num">NUM</span><span class="cell cell-state">СТАТУС: БД *, Документ *</span></footer>

  <nav class="taskbar">
    <div class="sys"><button aria-label="Пуск"><svg><use href="#k-win"/></svg></button><button aria-label="Поиск"><svg><use href="#k-search"/></svg></button><button aria-label="Представление задач"><svg><use href="#k-task"/></svg></button></div>
    <div class="apps">
      <button class="run many" aria-label="Проводник"><svg><use href="#k-exp"/></svg></button>
      <button class="run" aria-label="Chrome"><svg><use href="#k-chrome"/></svg></button>
      <button class="run" aria-label="Блокнот"><svg><use href="#k-note"/></svg></button>
      <button class="run" aria-label="Telegram"><svg><use href="#k-tg"/></svg><span class="badge small">.24</span></button>
      <button class="run" aria-label="Viber"><svg><use href="#k-viber"/></svg><span class="badge">12</span></button>
      <button class="run" aria-label="Discord"><svg><use href="#k-discord"/></svg></button>
      <button class="run" aria-label="Связь"><svg><use href="#k-ring"/></svg></button>
      <button aria-label="Цвет"><svg><use href="#k-sun"/></svg></button>
      <button aria-label="Калькулятор"><svg><use href="#k-calc"/></svg></button>
      <button aria-label="PuTTY"><svg><use href="#k-putty"/></svg></button>
      <button aria-label="1С"><svg><use href="#k-1c"/></svg></button>
      <button aria-label="Paint"><svg><use href="#k-paint"/></svg></button>
      <button class="run many" aria-label="Writer"><svg><use href="#k-writer"/></svg></button>
      <button class="run" aria-label="FileZilla"><svg><use href="#k-fz"/></svg></button>
      <button aria-label="Терминал"><svg><use href="#k-term"/></svg></button>
      <button class="run many" aria-label="AnyDesk"><svg><use href="#k-any"/></svg></button>
      <button aria-label="Просмотр"><svg><use href="#k-eye"/></svg></button>
      <button aria-label="F"><svg><use href="#k-f"/></svg></button>
      <button class="run" aria-label="Командная строка"><svg><use href="#k-cmd"/></svg></button>
      <button aria-label="Skype"><svg><use href="#k-skype"/></svg></button>
      <button aria-label="TeamViewer"><svg><use href="#k-tv"/></svg></button>
      <button aria-label="Calc"><svg><use href="#k-calcs"/></svg></button>
      <button class="run" aria-label="Замок"><svg><use href="#k-lock"/></svg></button>
      <button class="run many" aria-label="1С:Предприятие 8"><svg><use href="#k-1c"/></svg></button>
      <button class="run" aria-label="Параметры"><svg><use href="#k-gear"/></svg></button>
      <button class="run" aria-label="Notepad++"><svg><use href="#k-npp"/></svg></button>
      <button class="run current" aria-label="Конфигуратор"><svg><use href="#k-1c7"/></svg></button>
    </div>
    <div class="tray">
      <button class="t-people" aria-label="Люди"><svg><use href="#s-people"/></svg></button>
      <button aria-label="Скрытые значки"><svg><use href="#s-up"/></svg></button>
      <button aria-label="Сеть"><svg><use href="#s-net"/></svg></button>
      <button aria-label="Громкость"><svg><use href="#s-vol"/></svg></button>
      <span class="lang">РУС</span>
      <time class="clock"><span>9:54</span><span>10.11.2020</span></time>
      <button class="t-msg" aria-label="Уведомления"><svg><use href="#s-msg"/></svg></button>
      <i class="peek"></i>
    </div>
  </nav>

  <form class="dialog" role="dialog" aria-labelledby="dlg-title">
    <div class="dlg-head"><h2 id="dlg-title">Свойства Реквизита</h2><button type="button" class="dlg-close" aria-label="Закрыть"><svg><use href="#x"/></svg></button></div>
    <div class="dlg-body">
      <div class="dlg-main">
        <div class="dlg-tabs"><button type="button" class="active">Общие</button><button type="button">Дополнительные</button></div>
        <div class="dlg-page">
          <label for="f-id">Идентификатор:</label><input class="mid" id="f-id" value="Идентификатор">
          <label for="f-syn">Синоним:</label><input class="mid" id="f-syn" value="Идентификатор для XML-обмена">
          <label for="f-com">Комментарий:</label><input id="f-com">
          <label for="f-type">Тип значения:</label><span class="combo"><select id="f-type"><option>&lt;&lt;Строка&gt;&gt;</option></select><span class="drop"><svg><use href="#tri"/></svg></span></span>
          <label class="low" for="f-len">Длина:</label>
          <div class="len">
            <span class="spin"><input id="f-len" value="36"><span class="spin-btns"><button type="button" aria-label="Больше"><svg class="flip"><use href="#tri"/></svg></button><button type="button" aria-label="Меньше"><svg><use href="#tri"/></svg></button></span></span>
            <label class="dim"><input type="checkbox" disabled>Неогр.</label>
            <label class="prec" for="f-prec">Точность:</label>
            <span class="spin dim"><input id="f-prec" value="0" disabled><span class="spin-btns"><button type="button" disabled aria-label="Больше"><svg class="flip"><use href="#tri"/></svg></button><button type="button" disabled aria-label="Меньше"><svg><use href="#tri"/></svg></button></span></span>
          </div>
        </div>
      </div>
      <div class="dlg-side">
        <div class="dlg-tools">
          <button type="button" aria-label="Справка"><svg viewBox="0 0 16 16"><path d="M3.500 5.500v-2l2-2h4l2 2v3l-2 2v2h-3v-3l2-2v-1h-2v1zM6.500 12.500h3v2h-3z" fill="#fff" stroke="#000"/></svg></button>
          <button type="button" aria-label="Закрепить"><svg viewBox="0 0 16 16"><path d="M0 8.500h6M6.500 4v9M6.500 6.500h3l2-1M6.500 11h3l2 1M11.500 4.500h3v8h-3z" fill="none" stroke="#000"/></svg></button>
        </div>
        <button type="button">OK</button><button type="button">Отмена</button><button type="button">Обновить</button>
      </div>
    </div>
  </form>
</div>
</main>
</body>
</html>
```
FILE: styles.css
```css
:root {
  --face: #f0f0f0;
  --shade: #a0a0a0;
  --dark: #696969;
  --ui: Roboto, "Open Sans", sans-serif;
  --ms: "Liberation Sans", Arial, sans-serif;
}

* { box-sizing: border-box; }

body {
  margin: 0;
  height: 100vh;
  display: flex;
  background: #fff;
  font: 12px/16px var(--ui);
  color: #000;
}

button, input, select { font: inherit; color: inherit; margin: 0; padding: 0; }
button { border: 0; background: none; }
h1, h2 { margin: 0; font-size: inherit; font-weight: 400; }
svg { display: block; flex: none; }
i { font-style: normal; }
.sprite { position: absolute; width: 0; height: 0; }
.i16 { width: 16px; height: 16px; }

.sheet {
  flex: 1;
  display: flex;
  margin: 6px;
  padding: 20px 20px 75px;
  background: #f6f5f3;
  box-shadow: 0 0 5px 1px rgba(0, 0, 0, .4);
}

.app {
  flex: 1;
  min-width: 0;
  display: flex;
  flex-direction: column;
  position: relative;
  background: var(--face);
}

/* Title and menu */
.titlebar { display: flex; align-items: center; gap: 5px; height: 23px; padding-left: 2px; background: #fff; }
.titlebar .title { flex: 1; }
.win-btns { display: flex; padding-right: 2px; }
.win-btns button { width: 46px; height: 20px; display: grid; place-items: center; }
.win-btns svg { width: 10px; height: 10px; shape-rendering: crispEdges; }

.menubar { display: flex; align-items: center; height: 21px; padding: 0 1px 1px 7px; background: #fff; border-bottom: 1px solid var(--shade); }
.menubar > button { padding: 0 6px 0 7px; }
.mdi-btns { display: flex; gap: 1px; margin-left: auto; }
.mdi-btns button { width: 18px; height: 18px; display: grid; place-items: center; border: 1px solid #e3e3e3; }
.mdi-btns svg { width: 8px; height: 8px; }

/* Toolbars */
.bars { --c1: #e00000; --c2: #008000; --c3: #0000e0; --c4: #0000c0; --c5: #40e0e0; --c6: #808000; }
.bar-row { display: flex; height: 30px; border-top: 1px solid #fff; }
.bar { display: flex; align-items: center; height: 28px; padding-right: 7px; border-right: 1px solid var(--shade); box-shadow: 1px 0 #fff; margin-right: 1px; }
.bar-top { height: 29px; border-bottom: 1px solid var(--shade); }
.bar-low { height: 28px; }
.bar-low .bar { height: 27px; padding-left: 5px; border: 0; box-shadow: none; }
.bar button { width: 23px; height: 22px; display: grid; place-items: center; }
.bar button svg { width: 16px; height: 16px; shape-rendering: crispEdges; }
.bar button .smooth { shape-rendering: auto; }
.grip { width: 7px; height: 26px; margin: 0 0 0 3px; border: 1px solid; border-color: #fff var(--shade) #fff #fff; background: linear-gradient(90deg, transparent 1px, var(--shade) 1px 2px, transparent 2px 3px, #fff 3px 4px, transparent 4px); }
.sep { width: 8px; height: 22px; background: linear-gradient(90deg, transparent 4px, var(--shade) 4px 5px, #fff 5px 6px, transparent 6px); }
.off { --c1: #a0a0a0; --c2: #a0a0a0; --c3: #a0a0a0; --c4: #a0a0a0; --c5: #f0f0f0; --c6: #a0a0a0; color: #a0a0a0; }
.off svg { filter: drop-shadow(1px 1px 0 #fff); }

.combo { position: relative; display: flex; border: 1px solid; border-color: var(--shade) #fff #fff var(--shade); box-shadow: inset 1px 1px var(--dark), inset -1px -1px #e3e3e3; background: #fff; }
.combo select { flex: 1; appearance: none; border: 0; background: none; padding: 0 20px 0 2px; font: 11px/16px var(--ms); }
.drop { position: absolute; right: 1px; top: 1px; bottom: 1px; width: 17px; display: grid; place-items: center; background: var(--face); border: 1px solid; border-color: #fff var(--dark) var(--dark) #fff; pointer-events: none; }
.drop svg { width: 8px; height: 8px; }
.combo-find { width: 148px; height: 22px; margin: 0 1px 0 0; }

/* Metadata tree */
.mdi { flex: 1; min-height: 0; display: flex; flex-direction: column; padding: 1px 4px 0 2px; }
.tree-frame { flex: 1; min-height: 0; display: flex; border: 1px solid var(--shade); border-left: 2px solid #e3e3e3; box-shadow: inset 1px 1px #a0a0a0, inset 2px 2px #000, 1px 0 #000, 0 1px #000; padding: 2px 4px 2px 2px; }
.tree { flex: 1; min-width: 0; margin: 0; padding: 0; overflow: hidden; list-style: none; background: #fff; font: 11px/16px var(--ms); }
.tree li {
  --v: repeating-linear-gradient(#808080 0 1px, transparent 1px 2px);
  --h: repeating-linear-gradient(90deg, #808080 0 1px, transparent 1px 2px);
  --ink: linear-gradient(#000, #000);
  --paper: linear-gradient(#fff, #fff);
  --edge: linear-gradient(#808080, #808080);
  display: flex;
  height: 16px;
  background-repeat: no-repeat;
}
.tree svg { width: 16px; height: 16px; margin: 0 3px 0 1px; shape-rendering: crispEdges; }
.tree span { padding: 0 2px; }
.tree .sel { background: #efefef; }
.tree .node {
  padding-left: 56px;
  background-image: var(--v), var(--v), var(--h);
  background-position: 27px 0, 46px 0, 46px 8px;
  background-size: 1px 16px, 1px 16px, 11px 1px;
}
.tree .plus {
  background-image: var(--ink), var(--ink), var(--paper), var(--edge), var(--v), var(--v), var(--h);
  background-position: 44px 8px, 46px 6px, 43px 5px, 42px 4px, 27px 0, 46px 0, 46px 8px;
  background-size: 5px 1px, 1px 5px, 7px 7px, 9px 9px, 1px 16px, 1px 16px, 11px 1px;
}
.tree .minus {
  background-image: var(--ink), var(--paper), var(--edge), var(--v), var(--v), var(--h);
  background-position: 44px 8px, 43px 5px, 42px 4px, 27px 0, 46px 0, 46px 8px;
  background-size: 5px 1px, 7px 7px, 9px 9px, 1px 16px, 1px 16px, 11px 1px;
}
.tree .leaf {
  padding-left: 75px;
  background-image: var(--v), var(--v), var(--v), var(--h);
  background-position: 27px 0, 46px 0, 65px 0, 65px 8px;
  background-size: 1px 16px, 1px 16px, 1px 16px, 11px 1px;
}
.tree .last { background-size: 1px 16px, 1px 16px, 1px 9px, 11px 1px; }

.vscroll { width: 15px; display: flex; flex-direction: column; align-items: center; padding: 5px 0; background: var(--face); }
.vscroll svg, .hscroll svg { width: 8px; height: 8px; }
.vthumb { width: 15px; height: 134px; margin: 46px 0 auto; background: #cdcdcd; }
.flip { transform: rotate(180deg); }
.left { transform: rotate(-90deg); }
.right { transform: rotate(90deg); }

.tabs { display: flex; align-items: flex-start; gap: 2px; height: 30px; padding-left: 12px; }
.tab { display: flex; align-items: center; gap: 4px; height: 22px; margin-top: 1px; padding: 0 12px 0 4px; border: 1px solid #000; border-top: 0; border-left-color: #fff; border-radius: 0 0 4px 4px; box-shadow: inset -1px -1px var(--shade); font: 11px/16px var(--ms); }
.tab.active { position: relative; height: 23px; margin-top: 0; padding-right: 8px; background: var(--face); font-weight: 700; }
.tab svg { width: 16px; height: 16px; }

/* Docked panels */
.docks { display: flex; height: 153px; border-top: 1px solid var(--shade); border-bottom: 1px solid var(--shade); box-shadow: inset 0 1px var(--dark), 0 1px #fff, 0 2px #e3e3e3; padding: 4px 0; }
.dock { flex: 1; display: flex; gap: 2px; padding: 0 8px 0 4px; }
.dock:first-child { border-right: 2px solid var(--dark); margin: -3px 0 -4px; padding: 3px 8px 4px 4px; }
.dock:last-child { padding-right: 3px; padding-left: 3px; }
.dock-side { width: 12px; display: flex; flex-direction: column; align-items: center; gap: 1px; padding-top: 1px; }
.dock-side button { width: 12px; height: 12px; display: grid; place-items: center; border: 1px solid; border-color: #fff var(--dark) var(--dark) #fff; }
.dock-side svg { width: 6px; height: 6px; }
.dock-grip { flex: 1; width: 7px; margin-top: 1px; border: 1px solid var(--shade); border-width: 0 1px 1px 0; background: linear-gradient(90deg, #fff 1px, transparent 1px 2px, var(--shade) 2px 3px, transparent 3px 4px, #fff 4px 5px, transparent 5px); }
.pane { flex: 1; display: flex; flex-direction: column; border: 1px solid; border-color: var(--shade) #fff #fff var(--shade); background: #fff; box-shadow: inset 1px 1px var(--dark), inset -1px -1px #e3e3e3; padding: 1px; }
.pane-body { flex: 1; display: flex; }
.gutter { width: 28px; background: #c0c0c0; }
.hscroll { height: 16px; display: flex; align-items: center; gap: 5px; padding: 0 4px; background: var(--face); }
.hthumb { width: 142px; height: 15px; margin-right: auto; background: #cdcdcd; }

/* Open windows and status */
.windows { display: flex; gap: 2px; height: 27px; padding: 5px 2px 1px; }
.windows button { width: 317px; height: 21px; display: flex; align-items: center; gap: 2px; padding: 0 2px; border: 1px solid; border-color: #fff var(--dark) var(--dark) #fff; box-shadow: inset -1px -1px var(--shade); text-align: left; white-space: nowrap; overflow: hidden; }
.windows .active { border-color: var(--dark) #fff #fff var(--dark); box-shadow: inset 1px 1px var(--shade); background: #f7f7f7; font-weight: 700; }
.windows svg { width: 15px; height: 15px; }
.status { display: flex; align-items: center; gap: 3px; height: 21px; padding: 2px 1px 0 2px; border-top: 1px solid var(--shade); box-shadow: inset 0 1px #fff; }
.hint { flex: 1; }
.cell { height: 17px; padding: 0 2px; border: 1px solid; border-color: var(--shade) #fff #fff var(--shade); }
.cell-blank { width: 28px; }
.cell-num { width: 33px; }
.cell-state { width: 155px; }

/* Taskbar */
.taskbar { display: flex; height: 40px; background: #2e2d2d; color: #fff; }
.sys, .apps { display: flex; }
.apps { gap: 1px; padding-left: 3px; }
.taskbar .sys button, .taskbar .apps button { position: relative; width: 48px; height: 40px; display: grid; place-items: center; }
.taskbar .sys svg { width: 22px; height: 22px; }
.apps svg { width: 24px; height: 24px; }
.run { background: linear-gradient(#76b9ed, #76b9ed) 4px 38px / 40px 2px no-repeat; }
.many { background: linear-gradient(90deg, #76b9ed 31px, #3f6a8c 31px 32px, #5c90b8 32px) 4px 38px / 40px 2px no-repeat; }
.current { background: linear-gradient(#76b9ed, #76b9ed) 0 38px / 48px 2px no-repeat #5a5959; }
.badge { position: absolute; left: 24px; top: 17px; min-width: 16px; height: 17px; border-radius: 4px; background: #ff3b30; font: 12px/17px var(--ui); text-align: center; }
.badge.small { top: 23px; height: 12px; font: 10px/12px var(--ui); border-radius: 2px; }
.tray { display: flex; align-items: center; margin-left: auto; }
.tray button { width: 24px; height: 40px; display: grid; place-items: center; }
.tray svg { width: 16px; height: 16px; }
.tray .t-people { margin-right: 12px; }
.lang { width: 36px; text-align: center; }
.clock { width: 64px; margin-left: 2px; display: flex; flex-direction: column; gap: 1px; font-size: 11px; text-align: center; }
.tray .t-msg { width: 42px; }
.peek { width: 5px; height: 40px; margin-left: 7px; border-left: 1px solid #777; }

/* Property dialog */
.dialog { position: absolute; left: 791px; top: 435px; width: 408px; border-top: 1px solid #1883d7; background: var(--face); box-shadow: 0 4px 14px rgba(0, 0, 0, .45); font: 11px/16px var(--ms); }
.dlg-head { display: flex; justify-content: space-between; align-items: center; height: 25px; padding: 0 1px 1px 3px; background: #fff; font: 12px/16px var(--ui); }
.dlg-close { width: 19px; height: 19px; display: grid; place-items: center; background: #c75050; color: #fff; }
.dlg-close svg { width: 6px; height: 6px; }
.dlg-body { display: flex; justify-content: space-between; padding: 8px 4px 3px 6px; }
.dlg-main { width: 326px; }
.dlg-tabs { display: flex; align-items: flex-end; height: 19px; }
.dlg-tabs button { height: 17px; padding: 0 4px; border: 1px solid #fff; border-bottom: 0; border-right: 2px solid var(--dark); border-radius: 2px 2px 0 0; }
.dlg-tabs .active { height: 19px; padding: 0 6px 2px; }
.dlg-page { display: grid; grid-template-columns: 95px 208px; grid-auto-rows: 20px; row-gap: 3px; align-items: center; padding: 4px 0 12px 9px; border: 1px solid #fff; border-right: 2px solid var(--dark); border-bottom: 2px solid var(--dark); box-shadow: inset -1px -1px #d0d0d0; }
.dlg-page > input, .spin { height: 20px; border: 1px solid; border-color: var(--shade) #fff #fff var(--shade); box-shadow: inset 1px 1px var(--dark), inset -1px -1px #e3e3e3; background: #fff; padding: 0 1px; min-width: 0; }
.dlg-page .mid { width: 140px; }
.dlg-page .combo { height: 20px; }
.dlg-page .combo svg { width: 8px; height: 8px; }
.len, .dlg-page .low { padding-top: 5px; }
.len { display: flex; align-items: center; }
.spin { display: flex; width: 38px; padding: 2px; }
.spin > input { flex: 1; width: 12px; border: 0; background: none; outline: 0; }
.spin-btns { width: 16px; display: grid; grid-template-rows: 7px 7px; }
.spin-btns button { display: grid; place-items: center; background: var(--face); border: 1px solid; border-color: #fff var(--dark) var(--dark) #fff; }
.spin-btns svg { width: 4px; height: 4px; }
.dim { color: #a0a0a0; }
.spin.dim { background: var(--face); }
label.dim { display: flex; align-items: center; gap: 6px; margin-left: 7px; text-shadow: 1px 1px #fff; }
label.dim input { appearance: none; width: 12px; height: 12px; border: 1px solid; border-color: var(--dark) #fff #fff var(--dark); }
.prec { margin-left: auto; padding-right: 3px; }
.dlg-side { width: 65px; display: flex; flex-direction: column; gap: 5px; }
.dlg-side button { height: 23px; border: 1px solid; border-color: #fff var(--dark) var(--dark) #fff; box-shadow: inset -1px -1px var(--shade); }
.dlg-tools { display: flex; justify-content: flex-end; gap: 5px; height: 27px; margin: -1px 0 40px; padding-right: 2px; }
.dlg-side .dlg-tools button { width: 27px; height: 27px; display: grid; place-items: center; }
.dlg-tools svg { width: 16px; height: 16px; shape-rendering: crispEdges; }
```
